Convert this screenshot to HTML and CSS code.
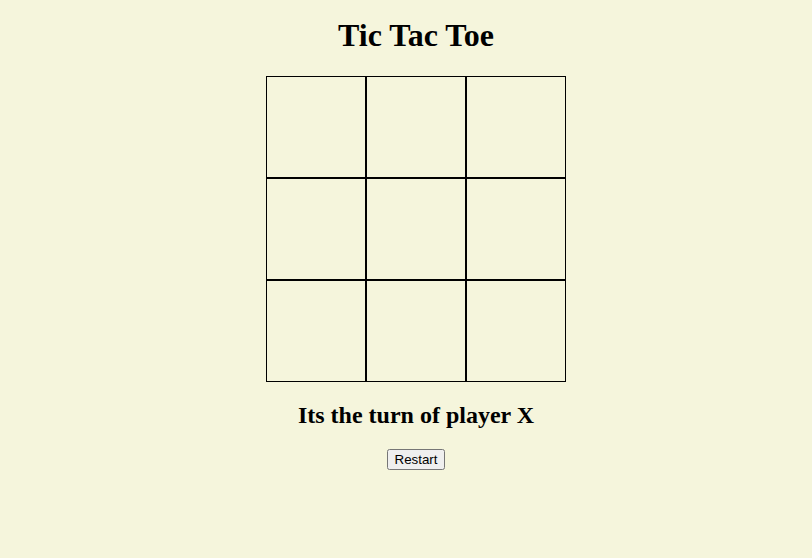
FILE: index.html
```html
<!DOCTYPE html>
<html>
<head>
<meta charset="utf-8">
<title>Tic Tac Toe</title>
<link rel="stylesheet" href="styles.css">
</head>
<body>
<main class="game">
  <h1 class="title">Tic Tac Toe</h1>
  <div class="board">
    <div class="cell"></div><div class="cell"></div><div class="cell"></div>
    <div class="cell"></div><div class="cell"></div><div class="cell"></div>
    <div class="cell"></div><div class="cell"></div><div class="cell"></div>
  </div>
  <h2 class="status">Its the turn of player X</h2>
  <button class="restart">Restart</button>
</main>
</body>
</html>
```
FILE: styles.css
```css
html, body {
  margin: 0;
  background: #f5f5dc;
}
body {
  font-family: "Liberation Serif", "Times New Roman", serif;
  color: #000;
}
.game {
  padding-left: 20px;
  padding-top: 17px;
  display: flex;
  flex-direction: column;
  align-items: center;
}
.title {
  font-size: 32px;
  font-weight: bold;
  margin: 0 0 22px;
  line-height: 37px;
}
.board {
  display: grid;
  grid-template-columns: repeat(3, 100px);
  grid-auto-rows: 102px;
}
.cell {
  border: 1px solid #000;
}
.status {
  font-size: 24px;
  font-weight: bold;
  margin: 19px 0 20px;
  line-height: 28px;
}
.restart {
  font-family: "Liberation Sans", Arial, sans-serif;
  font-size: 13.33px;
}
```
